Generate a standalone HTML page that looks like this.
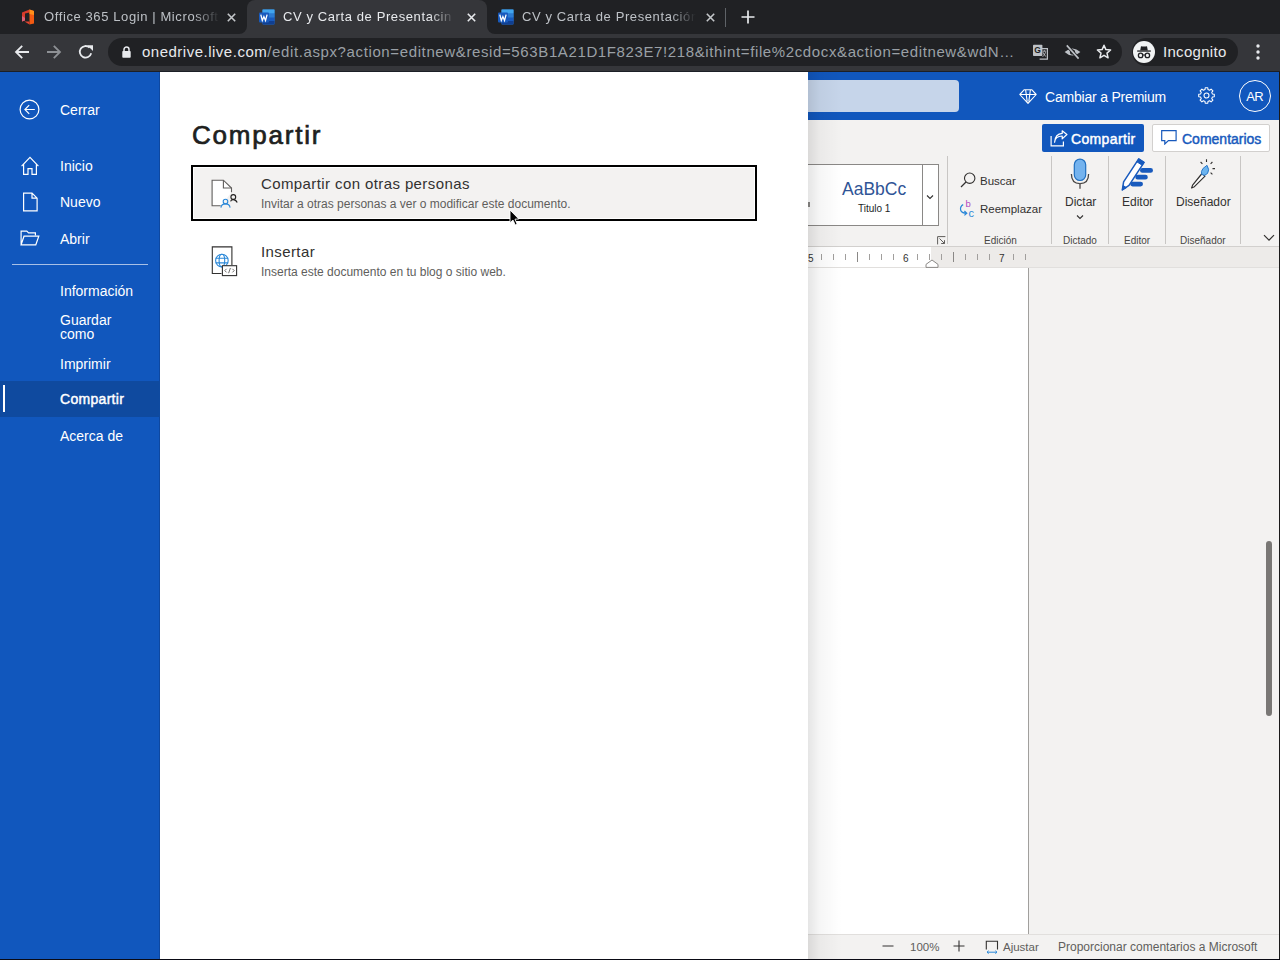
<!DOCTYPE html>
<html><head><meta charset="utf-8">
<style>
*{margin:0;padding:0;box-sizing:border-box}
html,body{width:1280px;height:960px;overflow:hidden;background:#fff;font-family:"Liberation Sans",sans-serif}
.abs{position:absolute}
#tabs{position:absolute;left:0;top:0;width:1280px;height:34px;background:#202124}
#toolbar{position:absolute;left:0;top:34px;width:1280px;height:38px;background:#35363a}
.url{font-size:15px;line-height:18px;letter-spacing:0.5px;color:#9aa0a6;white-space:nowrap;overflow:hidden}
.tt{font-size:13px;line-height:16px;white-space:nowrap;overflow:hidden;letter-spacing:0.6px;-webkit-mask-image:linear-gradient(to right,#000 85%,transparent)}
.ni{position:absolute;left:60px;font-size:14px;line-height:18px;color:#fff;white-space:nowrap}
.pt{font-size:15px;line-height:18px;color:#323130;letter-spacing:0.4px;white-space:nowrap}
.ps{font-size:12px;line-height:16px;color:#605e5c;white-space:nowrap}
.rsep{position:absolute;top:84px;width:1px;height:88px;background:#c8c6c4}
.rl{font-size:11.5px;line-height:14px;color:#323130;white-space:nowrap}
.bl{font-size:12px;line-height:14px;color:#323130;white-space:nowrap}
.gl{font-size:10px;line-height:12px;color:#484644;white-space:nowrap}
.rn{font-size:10px;line-height:12px;color:#323130}
.sl{font-size:11.5px;line-height:14px;color:#605e5c;white-space:nowrap}
#omni{position:absolute;left:108px;top:4px;width:1014px;height:28px;border-radius:14px;background:#202124}
#content{position:absolute;left:0;top:72px;width:1280px;height:888px;background:#fff;overflow:hidden}
#nav{position:absolute;left:0;top:0;width:160px;height:888px;background:#1157bd}
#panel{position:absolute;left:160px;top:0;width:648px;height:888px;background:#fff}
#word{position:absolute;left:808px;top:0;width:472px;height:888px;background:#f3f2f1}
</style></head><body>
<div id="tabs">
  <!-- tab strip lighter underlay for active tab flare -->
  <div class="abs" style="left:239px;top:26px;width:256px;height:8px;background:#35363a"></div>
  <div class="abs" style="left:231px;top:0;width:16px;height:34px;background:#202124;border-bottom-right-radius:8px"></div>
  <div class="abs" style="left:487px;top:0;width:16px;height:34px;background:#202124;border-bottom-left-radius:8px"></div>
  <div class="abs" style="left:247px;top:0;width:240px;height:34px;background:#35363a;border-radius:8px 8px 0 0"></div>
  <!-- tab1 -->
  <svg class="abs" style="left:21px;top:9px" width="14" height="16" viewBox="0 0 14 16">
    <path d="M1 3.5 L8.5 0.5 L8.5 3.5 L4 4.5 L4 11.5 L1 12.5 Z" fill="#d83b2b"/>
    <path d="M1 12.5 L4 11.5 L4 9 L1 7 Z" fill="#e06a8a" opacity="0.8"/>
    <path d="M8.5 0.5 L13 2 L13 14.5 L8.5 15.5 Z" fill="#f25a12"/>
    <path d="M8.5 0.5 L13 2 L13 6 L8.5 5 Z" fill="#ff8f1a"/>
    <path d="M3.5 12.5 L8.5 12.5 L8.5 15.5 Z" fill="#e8432f"/>
  </svg>
  <div class="abs tt" style="left:44px;top:9px;width:176px;color:#bdc1c6">Office 365 Login | Microsoft</div>
  <svg class="abs" style="left:227px;top:13px" width="9" height="9" viewBox="0 0 9 9"><path d="M0.8 0.8 L8.2 8.2 M8.2 0.8 L0.8 8.2" stroke="#c4c7ca" stroke-width="1.6"/></svg>
  <!-- tab2 -->
  <svg class="abs word" style="left:259px;top:9px" width="16" height="16" viewBox="0 0 16 16">
    <rect x="3.5" y="0.5" width="12" height="15" rx="1" fill="#2b7cd3"/>
    <rect x="3.5" y="0.5" width="12" height="4" fill="#41a5ee"/>
    <rect x="3.5" y="4.5" width="12" height="4" fill="#2b7cd3"/>
    <rect x="3.5" y="8.5" width="12" height="4" fill="#185abd"/>
    <rect x="3.5" y="12" width="12" height="3.5" fill="#103f91"/>
    <rect x="0" y="3.5" width="10" height="10" rx="1" fill="#185abd"/>
    <path d="M1.8 5.6 L3.3 11.4 L4.9 7.6 L6.5 11.4 L8.1 5.6" stroke="#fff" stroke-width="1.3" fill="none"/>
  </svg>
  <div class="abs tt" style="left:283px;top:9px;width:172px;color:#e8eaed">CV y Carta de Presentacin</div>
  <svg class="abs" style="left:467px;top:13px" width="9" height="9" viewBox="0 0 9 9"><path d="M0.8 0.8 L8.2 8.2 M8.2 0.8 L0.8 8.2" stroke="#e8eaed" stroke-width="1.6"/></svg>
  <!-- tab3 -->
  <svg class="abs" style="left:498px;top:9px" width="16" height="16" viewBox="0 0 16 16">
    <rect x="3.5" y="0.5" width="12" height="15" rx="1" fill="#2b7cd3"/>
    <rect x="3.5" y="0.5" width="12" height="4" fill="#41a5ee"/>
    <rect x="3.5" y="4.5" width="12" height="4" fill="#2b7cd3"/>
    <rect x="3.5" y="8.5" width="12" height="4" fill="#185abd"/>
    <rect x="3.5" y="12" width="12" height="3.5" fill="#103f91"/>
    <rect x="0" y="3.5" width="10" height="10" rx="1" fill="#185abd"/>
    <path d="M1.8 5.6 L3.3 11.4 L4.9 7.6 L6.5 11.4 L8.1 5.6" stroke="#fff" stroke-width="1.3" fill="none"/>
  </svg>
  <div class="abs tt" style="left:522px;top:9px;width:174px;color:#bdc1c6">CV y Carta de Presentación</div>
  <svg class="abs" style="left:706px;top:13px" width="9" height="9" viewBox="0 0 9 9"><path d="M0.8 0.8 L8.2 8.2 M8.2 0.8 L0.8 8.2" stroke="#c4c7ca" stroke-width="1.6"/></svg>
  <div class="abs" style="left:725px;top:8px;width:1px;height:19px;background:#5f6368"></div>
  <svg class="abs" style="left:741px;top:10px" width="14" height="14" viewBox="0 0 14 14"><path d="M7 0.5 V13.5 M0.5 7 H13.5" stroke="#e8eaed" stroke-width="1.7"/></svg>
</div>
<div id="toolbar">
  <svg class="abs" style="left:14px;top:10px" width="16" height="16" viewBox="0 0 16 16"><path d="M15 8 H2.2 M8.2 1.8 L2 8 L8.2 14.2" stroke="#e8eaed" stroke-width="1.8" fill="none"/></svg>
  <svg class="abs" style="left:46px;top:10px" width="16" height="16" viewBox="0 0 16 16"><path d="M1 8 H13.8 M7.8 1.8 L14 8 L7.8 14.2" stroke="#8e9195" stroke-width="1.8" fill="none"/></svg>
  <svg class="abs" style="left:78px;top:10px" width="16" height="16" viewBox="0 0 16 16"><path d="M13.2 9.3 A5.8 5.8 0 1 1 11.6 3.6" stroke="#e8eaed" stroke-width="1.8" fill="none"/><path d="M9.2 1.2 H15 V7 Z" fill="#e8eaed"/></svg>
  <div id="omni">
    <svg class="abs" style="left:14px;top:8px" width="9" height="12" viewBox="0 0 9 12"><path d="M2 5.2 V3.6 A2.5 2.5 0 0 1 7 3.6 V5.2" stroke="#e8eaed" stroke-width="1.5" fill="none"/><rect x="0.3" y="5" width="8.4" height="6.8" rx="0.8" fill="#e8eaed"/></svg>
    <div class="abs url" style="left:34px;top:5px;width:876px"><span style="color:#e8eaed">onedrive.live.com</span><span style="letter-spacing:0.62px">/edit.aspx?action=editnew&amp;resid=563B1A21D1F823E7!218&amp;ithint=file%2cdocx&amp;action=editnew&amp;wdN…</span></div>
    <svg class="abs" style="left:925px;top:6px" width="16" height="16" viewBox="0 0 16 16"><path d="M6.6 4.6 H14.4 V15.2 H6.6" stroke="#bdc1c6" stroke-width="1.2" fill="none"/><rect x="0" y="0.7" width="9.4" height="11.4" rx="0.8" fill="#bdc1c6"/><text x="4.6" y="9.4" font-size="8.5" font-family="Liberation Sans" font-weight="bold" fill="#202124" text-anchor="middle">G</text><path d="M9.6 7.2 H13.2 M11.4 6.2 V7.2 M10 8.2 Q11.2 11.6 13.2 12.6 M12.6 8.2 Q11.4 11.8 9.6 12.8" stroke="#bdc1c6" stroke-width="0.9" fill="none"/></svg>
    <svg class="abs" style="left:956px;top:6px" width="17" height="16" viewBox="0 0 17 16"><path d="M0.6 8 Q8.5 0.8 16.4 8 Q8.5 15.2 0.6 8 Z" fill="#bdc1c6"/><circle cx="8.5" cy="8" r="2.6" fill="#202124"/><circle cx="8.5" cy="8" r="1.2" fill="#bdc1c6"/><path d="M2.8 1.4 L14.6 14.6" stroke="#202124" stroke-width="3.2"/><path d="M2.8 1.4 L14.6 14.6" stroke="#bdc1c6" stroke-width="1.6"/></svg>
    <svg class="abs" style="left:988px;top:6px" width="16" height="16" viewBox="0 0 16 16"><path d="M8 1.2 L9.9 5.6 L14.6 6 L11 9.1 L12.1 13.8 L8 11.3 L3.9 13.8 L5 9.1 L1.4 6 L6.1 5.6 Z" stroke="#e8eaed" stroke-width="1.5" fill="none" stroke-linejoin="round"/></svg>
  </div>
  <div class="abs" style="left:1132px;top:4px;width:106px;height:28px;border-radius:14px;background:#202124"></div>
  <div class="abs" style="left:1133px;top:7px;width:22px;height:22px;border-radius:11px;background:#f1f3f4"></div>
  <svg class="abs" style="left:1133px;top:7px" width="22" height="22" viewBox="0 0 22 22"><path d="M7.2 9.4 L8 5.2 Q11 5.9 14 5.2 L14.8 9.4 Z" fill="#202124"/><rect x="4.2" y="9.4" width="13.6" height="1.3" fill="#202124"/><circle cx="7.6" cy="14.4" r="2.2" stroke="#202124" stroke-width="1.3" fill="none"/><circle cx="14.4" cy="14.4" r="2.2" stroke="#202124" stroke-width="1.3" fill="none"/><path d="M9.8 14 H12.2" stroke="#202124" stroke-width="1"/></svg>
  <div class="abs" style="left:1163px;top:9px;font-size:15px;line-height:18px;color:#e8eaed;letter-spacing:0.3px">Incognito</div>
  <svg class="abs" style="left:1255px;top:10px" width="6" height="16" viewBox="0 0 6 16"><circle cx="3" cy="2" r="1.7" fill="#e8eaed"/><circle cx="3" cy="8" r="1.7" fill="#e8eaed"/><circle cx="3" cy="14" r="1.7" fill="#e8eaed"/></svg>
</div>
<div class="abs" style="left:0;top:71px;width:1280px;height:1px;background:#1c1f26"></div>
<div id="content">
  <div id="word">
    <div class="abs" style="left:0;top:0;width:472px;height:48px;background:#1157bd"></div>
    <div class="abs" style="left:-10px;top:8px;width:161px;height:32px;border-radius:4px;background:#c6d5ea"></div>
    <svg class="abs" style="left:211px;top:17px" width="18" height="16" viewBox="0 0 18 16"><path d="M5.3 0.7 H12.7 L17.2 5.5 L9 14.4 L0.8 5.5 Z M0.8 5.5 H17.2 M6.6 0.7 L8.2 12.6 M11.4 0.7 L9.8 12.6" stroke="#fff" stroke-width="1.1" fill="none" stroke-linejoin="round"/></svg>
    <div class="abs" style="left:237px;top:16px;font-size:14px;line-height:18px;color:#fff;letter-spacing:-0.2px;white-space:nowrap">Cambiar a Premium</div>
    <svg class="abs" style="left:390px;top:15px" width="17" height="17" viewBox="0 0 17 17"><path d="M16.29 7.20 L16.29 9.80 L14.42 9.98 L13.73 11.64 L14.93 13.09 L13.09 14.93 L11.64 13.73 L9.98 14.42 L9.80 16.29 L7.20 16.29 L7.02 14.42 L5.36 13.73 L3.91 14.93 L2.07 13.09 L3.27 11.64 L2.58 9.98 L0.71 9.80 L0.71 7.20 L2.58 7.02 L3.27 5.36 L2.07 3.91 L3.91 2.07 L5.36 3.27 L7.02 2.58 L7.20 0.71 L9.80 0.71 L9.98 2.58 L11.64 3.27 L13.09 2.07 L14.93 3.91 L13.73 5.36 L14.42 7.02 Z" stroke="#fff" stroke-width="1.05" fill="none" stroke-linejoin="round"/><circle cx="8.5" cy="8.5" r="2.5" stroke="#fff" stroke-width="1.05" fill="none"/></svg>
    <div class="abs" style="left:431px;top:8px;width:32px;height:32px;border-radius:16px;border:1.2px solid #fff;color:#fff;font-size:13px;line-height:32px;text-align:center;letter-spacing:-0.6px;text-indent:-0.6px">AR</div>
    <!-- ribbon -->
    <div class="abs" style="left:234px;top:52px;width:102px;height:28px;border-radius:2px;background:#1157bd"></div>
    <svg class="abs" style="left:242px;top:58px" width="18" height="17" viewBox="0 0 18 17"><path d="M1.1 6 V15.9 H13.4 V11.4" stroke="#fff" stroke-width="1.2" fill="none"/><path d="M4.6 12.2 Q5.2 6.2 12.2 6 V8.9 L16.9 4.5 L12.2 0.8 V3.4 Q5.2 3.8 4.6 12.2 Z" stroke="#fff" stroke-width="1.2" fill="none" stroke-linejoin="round"/></svg>
    <div class="abs" style="left:263px;top:59px;font-size:14px;line-height:16px;color:#fff;letter-spacing:0.35px;-webkit-text-stroke:0.45px #fff">Compartir</div>
    <div class="abs" style="left:344px;top:52px;width:118px;height:28px;border-radius:2px;background:#fff;border:1px solid #d2d0ce"></div>
    <svg class="abs" style="left:353px;top:58px" width="16" height="15" viewBox="0 0 16 15"><path d="M0.7 0.7 H15.1 V10.6 H7.4 L3.8 14 V10.6 H0.7 Z" stroke="#185abd" stroke-width="1.2" fill="none" stroke-linejoin="miter"/></svg>
    <div class="abs" style="left:374px;top:59px;font-size:14px;line-height:16px;color:#185abd;letter-spacing:0px;-webkit-text-stroke:0.45px #185abd">Comentarios</div>
    <!-- styles gallery -->
    <div class="abs" style="left:-5px;top:92px;width:136px;height:62px;background:#fff;border:1px solid #8a8886"></div>
    <div class="abs" style="left:114px;top:93px;width:1px;height:60px;background:#8a8886"></div>
    <svg class="abs" style="left:117px;top:121px" width="10" height="8" viewBox="0 0 10 8"><path d="M2 2.5 L5 5.5 L8 2.5" stroke="#323130" stroke-width="1.1" fill="none"/></svg>
    <div class="abs" style="left:0;top:130px;width:2px;height:5px;background:#8a8886"></div>
    <div class="abs" style="left:34px;top:106px;font-size:17.5px;line-height:22px;color:#2f5496;white-space:nowrap">AaBbCc</div>
    <div class="abs" style="left:50px;top:130px;font-size:10px;line-height:14px;color:#201f1e;white-space:nowrap">Titulo 1</div>
    <svg class="abs" style="left:129px;top:164px" width="9" height="9" viewBox="0 0 9 9"><path d="M0.6 8.4 V0.6 H8.4 M2.5 2.5 L7.5 7.5 M4.2 7.5 H7.5 V4.2" stroke="#605e5c" stroke-width="1" fill="none"/></svg>
    <div class="rsep" style="left:139px"></div>
    <div class="rsep" style="left:243px"></div>
    <div class="rsep" style="left:300px"></div>
    <div class="rsep" style="left:357px"></div>
    <div class="rsep" style="left:432px"></div>
    <!-- edicion -->
    <svg class="abs" style="left:152px;top:100px" width="16" height="16" viewBox="0 0 16 16"><circle cx="9.7" cy="6.2" r="5.2" stroke="#323130" stroke-width="1.1" fill="none"/><path d="M6 10 L1 15" stroke="#323130" stroke-width="1.3"/></svg>
    <div class="abs rl" style="left:172px;top:102px">Buscar</div>
    <svg class="abs" style="left:151px;top:127px" width="18" height="19" viewBox="0 0 18 19"><text x="6.6" y="8.4" font-size="9.5" font-family="Liberation Sans" fill="#b146c2">b</text><text x="9.6" y="17.6" font-size="11" font-family="Liberation Sans" fill="#2b88d8">c</text><path d="M4.2 5.6 Q1 7.2 1.6 11 Q2.4 14.2 7.6 14.2 M5.4 12 L7.8 14.2 L5.4 16.4" stroke="#2b88d8" stroke-width="1.2" fill="none"/></svg>
    <div class="abs rl" style="left:172px;top:130px">Reemplazar</div>
    <div class="abs gl" style="left:176px;top:163px">Edición</div>
    <!-- dictado -->
    <svg class="abs" style="left:262px;top:86px" width="20" height="32" viewBox="0 0 20 32"><path d="M1.4 16 Q1.4 25.6 10 25.6 Q18.6 25.6 18.6 16" stroke="#484644" stroke-width="1.3" fill="none"/><path d="M10 25.6 V30.8" stroke="#605e5c" stroke-width="1.5"/><rect x="4.3" y="1.1" width="11.4" height="21.4" rx="5.7" fill="#74b3ee" stroke="#1f6fc0" stroke-width="1.2"/></svg>
    <div class="abs bl" style="left:257px;top:123px">Dictar</div>
    <svg class="abs" style="left:268px;top:142px" width="8" height="6" viewBox="0 0 8 6"><path d="M1 1.5 L4 4.5 L7 1.5" stroke="#323130" stroke-width="1.1" fill="none"/></svg>
    <div class="abs gl" style="left:255px;top:163px">Dictado</div>
    <!-- editor -->
    <svg class="abs" style="left:308px;top:84px" width="45" height="37" viewBox="0 0 45 37">
      <path d="M26.4 14.4 H34.6 M21.7 21.2 H29.4 M16.6 28.1 H24.6" stroke="#185abd" stroke-width="4.8" stroke-linecap="round"/>
      <path d="M6.3 34 L7.6 25.9 L22.7 2.9 L28.1 6.3 L13 29.3 Z" fill="#fff" stroke="#185abd" stroke-width="1.5" stroke-linejoin="round"/>
      <path d="M22.7 2.9 L28.1 6.3 L26.2 9.2 L20.8 5.8 Z" fill="#185abd" stroke="#185abd" stroke-width="1"/>
      <path d="M6.3 34 L7.2 29.6 L10.4 31.6 Z" fill="#185abd" stroke="#185abd" stroke-width="1"/>
    </svg>
    <div class="abs bl" style="left:314px;top:123px">Editor</div>
    <div class="abs gl" style="left:316px;top:163px">Editor</div>
    <!-- disenador -->
    <svg class="abs" style="left:377px;top:83px" width="35" height="37" viewBox="0 0 35 37">
      <path d="M6.6 33 L7.6 30.1 L17 18.5 L20 21.1 L9.4 31.7 Z" fill="#fff" stroke="#323130" stroke-width="1.2" stroke-linejoin="round"/>
      <path d="M22 10.3 Q25 15 22.5 18.5 Q19.5 21.5 16.8 19.5 Q15.5 16.5 18 13.5 Z" fill="#6cb4ee" stroke="#2b79c9" stroke-width="1"/>
      <path d="M21.5 4.3 V7 M15.6 7 L17.4 8.8 M27.4 7 L25.6 8.8 M27.5 13.6 H30 M25.6 17.6 L27.4 19.4" stroke="#323130" stroke-width="1.1"/>
    </svg>
    <div class="abs bl" style="left:368px;top:123px">Diseñador</div>
    <div class="abs gl" style="left:372px;top:163px">Diseñador</div>
    <svg class="abs" style="left:455px;top:162px" width="12" height="8" viewBox="0 0 12 8"><path d="M1 1.2 L6 6.2 L11 1.2" stroke="#323130" stroke-width="1.2" fill="none"/></svg>
    <div class="abs" style="left:0;top:174px;width:472px;height:1px;background:#d2d0ce"></div>
    <!-- ruler -->
    <div class="abs" style="left:0;top:175px;width:472px;height:20px;background:#edebe9"></div>
    <div class="abs" style="left:0;top:175px;width:123px;height:20px;background:#fff"></div>
    <div class="abs" style="left:0;top:195px;width:472px;height:1px;background:#e1dfdd"></div>
    <div class="abs" style="left:13px;top:182px;width:1px;height:6px;background:#a19f9d"></div><div class="abs" style="left:25px;top:182px;width:1px;height:6px;background:#a19f9d"></div><div class="abs" style="left:37px;top:182px;width:1px;height:6px;background:#a19f9d"></div><div class="abs" style="left:49px;top:180px;width:1px;height:10px;background:#8a8886"></div><div class="abs" style="left:61px;top:182px;width:1px;height:6px;background:#a19f9d"></div><div class="abs" style="left:73px;top:182px;width:1px;height:6px;background:#a19f9d"></div><div class="abs" style="left:85px;top:182px;width:1px;height:6px;background:#a19f9d"></div><div class="abs" style="left:109px;top:182px;width:1px;height:6px;background:#a19f9d"></div><div class="abs" style="left:121px;top:182px;width:1px;height:6px;background:#a19f9d"></div><div class="abs" style="left:133px;top:182px;width:1px;height:6px;background:#a19f9d"></div><div class="abs" style="left:145px;top:180px;width:1px;height:10px;background:#8a8886"></div><div class="abs" style="left:157px;top:182px;width:1px;height:6px;background:#a19f9d"></div><div class="abs" style="left:169px;top:182px;width:1px;height:6px;background:#a19f9d"></div><div class="abs" style="left:181px;top:182px;width:1px;height:6px;background:#a19f9d"></div><div class="abs" style="left:205px;top:182px;width:1px;height:6px;background:#a19f9d"></div><div class="abs" style="left:217px;top:182px;width:1px;height:6px;background:#a19f9d"></div>
    <div class="abs rn" style="left:0px;top:181px">5</div>
    <div class="abs rn" style="left:95px;top:181px">6</div>
    <div class="abs rn" style="left:191px;top:181px">7</div>
    <svg class="abs" style="left:117px;top:187px" width="14" height="9" viewBox="0 0 14 9"><path d="M1 8.4 V5.4 L7 1 L13 5.4 V8.4 Z" fill="#fff" stroke="#8a8886" stroke-width="1"/></svg>
    <!-- doc -->
    <div class="abs" style="left:0;top:196px;width:220px;height:666px;background:#fff"></div>
    <div class="abs" style="left:220px;top:196px;width:1px;height:666px;background:#a19f9d"></div>
    <div class="abs" style="left:221px;top:196px;width:251px;height:666px;background:#f3f2f1"></div>
    <div class="abs" style="left:458px;top:469px;width:6px;height:175px;border-radius:3px;background:#797775"></div>
    <!-- status -->
    <div class="abs" style="left:0;top:862px;width:472px;height:26px;background:#f3f2f1;border-top:1px solid #e1dfdd"></div>
    <svg class="abs" style="left:74px;top:868px" width="12" height="12" viewBox="0 0 12 12"><path d="M0.5 6 H11.5" stroke="#323130" stroke-width="1"/></svg>
    <div class="abs sl" style="left:102px;top:868px">100%</div>
    <svg class="abs" style="left:145px;top:868px" width="12" height="12" viewBox="0 0 12 12"><path d="M0.5 6 H11.5 M6 0.5 V11.5" stroke="#323130" stroke-width="1.1"/></svg>
    <svg class="abs" style="left:177px;top:868px" width="14" height="14" viewBox="0 0 14 14"><path d="M1.3 9.6 V1.3 H12.5 V9.6" stroke="#323130" stroke-width="1.1" fill="none"/><path d="M2 12.2 H12 M3.6 10.8 L2 12.2 L3.6 13.6 M10.4 10.8 L12 12.2 L10.4 13.6" stroke="#2b88d8" stroke-width="1" fill="none"/></svg>
    <div class="abs sl" style="left:195px;top:868px">Ajustar</div>
    <div class="abs sl" style="left:250px;top:868px;font-size:12px">Proporcionar comentarios a Microsoft</div>
    <!-- panel shadow -->
    <div class="abs" style="left:0;top:0;width:34px;height:888px;background:linear-gradient(to right,rgba(0,0,0,0.1),rgba(0,0,0,0.035) 35%,rgba(0,0,0,0))"></div>
    <div class="abs" style="left:471px;top:0;width:1px;height:888px;background:#1a1a1a"></div>
    <div class="abs" style="left:0;top:887px;width:472px;height:1px;background:#1a1a1a"></div>
  </div>
  <div id="nav">
    <div class="abs" style="left:159px;top:0;width:1px;height:888px;background:#0e48a0"></div>
    <svg class="abs" style="left:19px;top:27px" width="22" height="22" viewBox="0 0 22 22"><circle cx="10.5" cy="10.5" r="9.4" stroke="#fff" stroke-width="1.2" fill="none"/><path d="M15.8 10.5 H6 M10.2 6.2 L5.9 10.5 L10.2 14.8" stroke="#fff" stroke-width="1.2" fill="none"/></svg>
    <div class="ni" style="top:29px">Cerrar</div>
    <svg class="abs" style="left:20px;top:84px" width="20" height="20" viewBox="0 0 20 20"><path d="M1.6 10.2 L10 1.4 L18.4 10.2 M3.6 8.2 V18.4 H8 V12.6 H12 V18.4 H16.4 V8.2" stroke="#fff" stroke-width="1.2" fill="none" stroke-linejoin="miter"/></svg>
    <div class="ni" style="top:85px">Inicio</div>
    <svg class="abs" style="left:22px;top:120px" width="17" height="20" viewBox="0 0 17 20"><path d="M1.6 1.1 H10 L15.1 6.2 V18.9 H1.6 Z M10 1.1 V6.2 H15.1" stroke="#fff" stroke-width="1.2" fill="none"/></svg>
    <div class="ni" style="top:121px">Nuevo</div>
    <svg class="abs" style="left:20px;top:158px" width="20" height="16" viewBox="0 0 20 16"><path d="M1.1 14.8 V1.1 H6.8 L8.6 2.9 H15.4 V5.2 M1.1 14.8 L4 6.2 H18.8 L15.8 14.8 Z" stroke="#fff" stroke-width="1.2" fill="none" stroke-linejoin="miter"/></svg>
    <div class="ni" style="top:158px">Abrir</div>
    <div class="abs" style="left:12px;top:192px;width:136px;height:1px;background:#a8c0e6"></div>
    <div class="ni" style="top:210px">Información</div>
    <div class="ni" style="top:241px;line-height:14px">Guardar<br>como</div>
    <div class="ni" style="top:283px">Imprimir</div>
    <div class="abs" style="left:0;top:309px;width:160px;height:36px;background:#0f4a9f"></div>
    <div class="abs" style="left:3px;top:313px;width:2px;height:27px;background:#fff"></div>
    <div class="ni" style="top:318px;letter-spacing:0.3px;-webkit-text-stroke:0.45px #fff">Compartir</div>
    <div class="ni" style="top:355px">Acerca de</div>
  </div>
  <div id="panel">
    
    <div class="abs" style="left:32px;top:47px;font-size:26px;line-height:32px;color:#201f1e;letter-spacing:1.8px;-webkit-text-stroke:0.7px #201f1e">Compartir</div>
    <div class="abs" style="left:31px;top:93px;width:566px;height:56px;border:2px solid #000;background:#f3f2f1;box-shadow:inset 0 0 0 1px #fff"></div>
    <svg class="abs" style="left:50px;top:107px" width="30" height="30" viewBox="0 0 30 30">
      <path d="M10.7 26.7 H2.1 V1.2 H13.4 L21.5 9 V13.2" stroke="#605e5c" stroke-width="1.1" fill="#fff"/>
      <path d="M13.4 1.2 V9 H21.5" stroke="#605e5c" stroke-width="1.1" fill="none"/>
      <circle cx="15.5" cy="22.6" r="2.3" stroke="#2b88d8" stroke-width="1.1" fill="none"/>
      <path d="M10.9 28.6 Q11.5 24.9 15.5 24.9 Q19.5 24.9 20.1 28.6" stroke="#2b88d8" stroke-width="1.1" fill="none"/>
      <circle cx="23.3" cy="18" r="2.4" stroke="#201f1e" stroke-width="1.1" fill="none"/>
      <path d="M20.6 22.4 Q21 20.6 23.3 20.6 Q25.8 20.6 27.2 23.6" stroke="#201f1e" stroke-width="1.1" fill="none"/>
    </svg>
    <div class="abs pt" style="left:101px;top:103px">Compartir con otras personas</div>
    <div class="abs ps" style="left:101px;top:124px">Invitar a otras personas a ver o modificar este documento.</div>
    <svg class="abs" style="left:50px;top:174px" width="30" height="32" viewBox="0 0 30 32">
      <path d="M11.5 27.5 H2.3 V0.9 H21.9 V19" stroke="#323130" stroke-width="1.1" fill="none"/>
      <circle cx="11.9" cy="14.6" r="6.3" stroke="#2b88d8" stroke-width="1.1" fill="#fff"/>
      <ellipse cx="11.9" cy="14.6" rx="2.8" ry="6.3" stroke="#2b88d8" stroke-width="1.1" fill="none"/>
      <path d="M5.6 12.3 H18.2 M5.6 16.9 H18.2" stroke="#2b88d8" stroke-width="1.1"/>
      <rect x="12.4" y="19.7" width="14.2" height="9.9" stroke="#323130" stroke-width="1.1" fill="#fff"/>
      <path d="M16.6 22.8 L14.8 24.6 L16.6 26.4 M22.4 22.8 L24.2 24.6 L22.4 26.4 M20.4 22 L18.6 27.2" stroke="#605e5c" stroke-width="0.9" fill="none"/>
    </svg>
    <div class="abs pt" style="left:101px;top:171px">Insertar</div>
    <div class="abs ps" style="left:101px;top:192px">Inserta este documento en tu blog o sitio web.</div>
  </div>
</div>
<div class="abs" style="left:0;top:959px;width:1280px;height:1px;background:#0a0a14"></div>
<svg class="abs" style="left:509px;top:209px" width="12" height="18" viewBox="0 0 12 18"><path d="M1 1 L1 13.8 L4 11 L6.2 16 L8.2 15.2 L6 10.2 L9.8 10 Z" fill="#000" stroke="#fff" stroke-width="0.9" stroke-linejoin="round"/></svg>
</body></html>
